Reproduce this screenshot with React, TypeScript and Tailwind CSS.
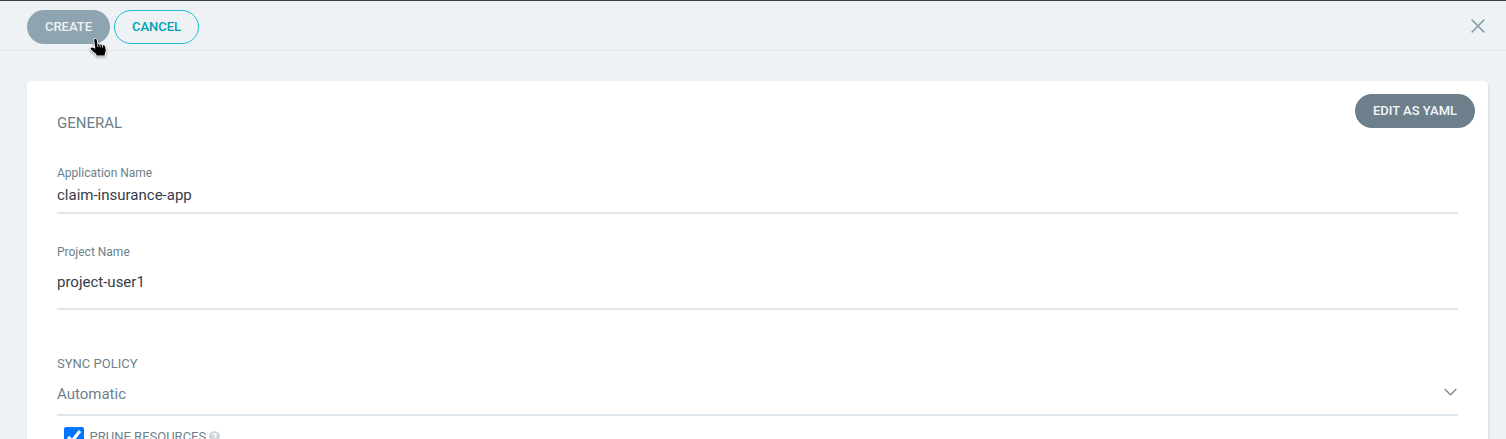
import React, { useState } from 'react';

function Field({ label, value, className }: { label: string; value: string; className: string }) {
  return (
    <div className={`flex flex-col border-b-2 border-[#dee6eb] ${className}`}>
      <label className="text-[12px] leading-4 text-[#6d7f8b]">{label}</label>
      <span className="text-[15px] leading-5 text-[#363c4a]">{value}</span>
    </div>
  );
}

function HandPointer() {
  return (
    <svg
      className="absolute top-[27px] left-[62px] drop-shadow-[0_1px_1px_rgba(0,0,0,0.4)]"
      width="19"
      height="21"
      viewBox="0 0 19 21"
    >
      <path
        d="M5.2 3C5.2 1.8 7.6 1.8 7.8 3L8.5 7.2C9.2 6.7 10.4 6.9 10.7 7.7C11.6 7.2 12.7 7.5 13.1 8.3C14.3 7.9 15.7 8.4 16.1 9.6L16.7 12.8C16.9 14.4 16.3 15.4 15.8 16.6V18.4H7.4V17C5.4 15.6 3.8 14.1 2.1 12.4C1 11.1 2.4 10.2 3.6 10.5L6.3 11.7Z"
        fill="#000"
        stroke="#fff"
        strokeWidth="1.8"
        strokeLinejoin="round"
        style={{ paintOrder: 'stroke' }}
      />
      <path d="M8.4 6.9L9 9.9M10.8 7.5L11.4 10.3M13.2 8.1L13.7 10.7" stroke="#fff" strokeWidth="0.8" />
    </svg>
  );
}

export default function App() {
  const [prune, setPrune] = useState(true);

  return (
    <div className="flex h-[439px] flex-col overflow-hidden bg-[#eef2f5] font-['Roboto',sans-serif] text-[#6d7f8b]">
      <header className="flex h-[51px] shrink-0 items-start justify-between border-t border-b border-t-[#3c3f43] border-b-[#dee6eb] pt-[9px] pr-[21px] pl-[27px]">
        <div className="flex gap-1">
          <div className="relative">
            <button className="h-[34px] w-[83px] rounded-full bg-[#8fa4b1] text-[13px] font-medium text-[#eef2f5]">
              CREATE
            </button>
            <HandPointer />
          </div>
          <button className="h-[34px] w-[85px] rounded-full border border-[#1fbdd0] text-[13px] font-medium text-[#00a2b3]">
            CANCEL
          </button>
        </div>
        <button aria-label="Close" className="mt-[9px]">
          <svg width="14" height="14" viewBox="0 0 14 14" fill="none" stroke="#8fa4b1" strokeWidth="1.8" strokeLinecap="round">
            <path d="M1.2 1.2L12.8 12.8M12.8 1.2L1.2 12.8" />
          </svg>
        </button>
      </header>

      <main className="mt-[30px] mr-[18px] ml-[27px] h-[500px] shrink-0 rounded-[4px] bg-white pr-[30px] pl-[30px] shadow-[1px_2px_3px_rgba(0,0,0,0.1)]">
        <div className="-mr-[17px] flex h-[84px] items-start justify-between pt-[13px]">
          <h2 className="mt-[19px] text-[15px] leading-5">GENERAL</h2>
          <button className="h-[34px] w-[120px] rounded-full bg-[#6d7f8b] text-[13px] font-medium text-[#f4f7f9]">
            EDIT AS YAML
          </button>
        </div>
        <Field label="Application Name" value="claim-insurance-app" className="h-[49px] gap-1" />
        <Field label="Project Name" value="project-user1" className="mt-[30px] h-[66px] gap-[12px]" />
        <div className="mt-[45px] flex h-[61px] flex-col gap-[11px] border-b-2 border-[#dee6eb]">
          <span className="text-[13px] leading-[18px]">SYNC POLICY</span>
          <div className="flex justify-between text-[15px] leading-5">
            <span>Automatic</span>
            <svg className="mt-1 mr-px" width="13" height="9" viewBox="0 0 13 9" fill="none" stroke="#6d7f8b" strokeWidth="1.2">
              <path d="M0.7 1L6.5 7L12.3 1" />
            </svg>
          </div>
        </div>
        <div className="mt-[11px] flex items-start pl-[7px]">
          <input
            type="checkbox"
            aria-label="Prune resources"
            checked={prune}
            onChange={() => setPrune(!prune)}
            className="h-5 w-5"
          />
          <span className="ml-[5.6px] text-[13px] leading-5">PRUNE RESOURCES</span>
          <svg className="mt-1 ml-[2.6px]" width="11" height="11" viewBox="0 0 11 11">
            <circle cx="5.5" cy="5.5" r="5.5" fill="#ccd6dd" />
            <path d="M3.9 4.2C4.1 2.3 7.2 2.4 7.1 4.2C7 5.2 5.6 5.2 5.6 6.3" fill="none" stroke="#fff" strokeWidth="1.5" />
            <circle cx="5.6" cy="8.1" r="0.8" fill="#fff" />
          </svg>
        </div>
      </main>
    </div>
  );
}
